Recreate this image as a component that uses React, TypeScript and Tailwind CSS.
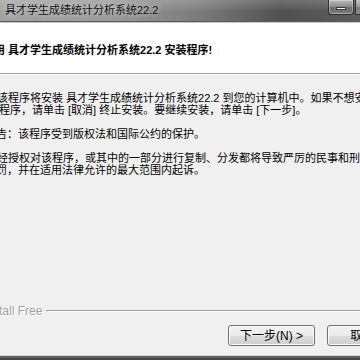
const FONT = "font-['Liberation_Sans','Noto_Sans_CJK_SC',sans-serif]";

function TitleBar() {
  return (
    <div className="relative h-[21px] shrink-0 flex items-start overflow-hidden bg-[linear-gradient(to_right,#a3a3a3_0%,#9a9a9a_30%,#7c7c7c_55%,#505050_78%,#5c5c5c_100%)]">
      {/* glass sheen */}
      <div className="absolute inset-x-0 top-0 h-[10px] bg-[linear-gradient(to_bottom,rgba(255,255,255,0.18),rgba(255,255,255,0.04))]" />
      <div className="relative pl-[5px] pt-[4px] text-[11px] leading-[13px] text-[#111] [text-shadow:0_0_5px_rgba(255,255,255,0.75)] whitespace-nowrap">
        具才学生成绩统计分析系统22.2
      </div>
      <div className="relative ml-auto flex">
        {/* minimize */}
        <div className="w-[26px] h-[15px] rounded-b-[4px] border border-t-0 border-[#2e2e2e] bg-[linear-gradient(to_bottom,#b9b9b9_0%,#8f8f8f_45%,#6b6b6b_55%,#7d7d7d_100%)] shadow-[inset_0_0_0_1px_rgba(255,255,255,0.35)] flex items-center justify-center">
          <div className="w-[10px] h-[3px] bg-white border border-[#3a3a3a] mt-[2px]" />
        </div>
        {/* maximize (cut off) */}
        <div className="w-[5px] h-[15px] ml-px border border-t-0 border-r-0 border-[#2e2e2e] bg-[linear-gradient(to_bottom,#c4c4c4_0%,#9c9c9c_45%,#7a7a7a_55%,#8a8a8a_100%)]" />
      </div>
    </div>
  );
}

function Line({ text, offset }: { text: string; offset: string }) {
  return <div className={`whitespace-nowrap ${offset}`}>{text}</div>;
}

export default function App() {
  return (
    <div className={`w-[360px] h-[360px] overflow-hidden flex flex-col bg-[#f0f0f0] text-black ${FONT}`}>
      <TitleBar />
      <div className="h-[2px] shrink-0 border-t border-[#5a5a5a] bg-[#c8c8c8]" />

      {/* header */}
      <div className="h-[51px] shrink-0 bg-white pt-[21px] border-b border-[#a0a0a0]">
        <div className="whitespace-nowrap ml-[-6px] text-[11px] leading-[13px] font-bold">
          用 具才学生成绩统计分析系统22.2 安装程序!
        </div>
      </div>
      <div className="h-px shrink-0 bg-white" />

      {/* body */}
      <div className="pt-[17px] text-[11px] leading-[12px] flex flex-col">
        <Line offset="ml-[-3px]" text="该程序将安装 具才学生成绩统计分析系统22.2 到您的计算机中。如果不想安装该" />
        <Line offset="ml-[-1px]" text="程序，请单击 [取消] 终止安装。要继续安装，请单击 [下一步]。" />
        <div className="h-[12px]" />
        <Line offset="ml-[-4px]" text="告：该程序受到版权法和国际公约的保护。" />
        <div className="h-[12px]" />
        <Line offset="ml-[-3px]" text="经授权对该程序，或其中的一部分进行复制、分发都将导致严厉的民事和刑事" />
        <Line offset="ml-[-4px]" text="罚，并在适用法律允许的最大范围内起诉。" />
      </div>

      <div className="flex-1" />

      {/* branding */}
      <div className="flex items-center gap-[4px] h-[14px] shrink-0">
        <span className="ml-[-17px] whitespace-nowrap text-[12px] leading-[14px] text-[#a3a3a3] [text-shadow:1px_1px_0_#ffffff]">
          Install Free
        </span>
        <div className="flex-1 flex flex-col">
          <div className="h-px bg-[#a0a0a0]" />
          <div className="h-px bg-white" />
        </div>
      </div>

      {/* buttons */}
      <div className="flex gap-[12px] pl-[228px] pt-[7px] pb-[9px] shrink-0">
        <button className="w-[87px] h-[21px] shrink-0 rounded-[3px] border border-[#707070] bg-[linear-gradient(#f2f2f2_0%,#ebebeb_50%,#dddddd_51%,#cfcfcf_100%)] shadow-[inset_0_0_0_1px_#fbfbfb] text-[12px] leading-[12px] text-black">
          下一步(N) &gt;
        </button>
        <button className="w-[87px] h-[21px] shrink-0 rounded-[3px] border border-[#707070] bg-[linear-gradient(#f2f2f2_0%,#ebebeb_50%,#dddddd_51%,#cfcfcf_100%)] shadow-[inset_0_0_0_1px_#fbfbfb] text-[12px] leading-[12px] text-black">
          取消(C)
        </button>
      </div>

      {/* window frame bottom */}
      <div className="h-[5px] shrink-0 border-t border-[#d5d5d5] bg-[linear-gradient(to_bottom,#6a6a6a,#3e3e3e)]" />
    </div>
  );
}
